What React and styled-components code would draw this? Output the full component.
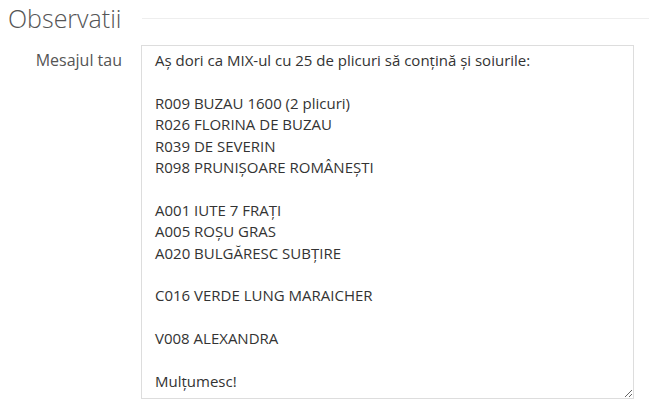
import React from 'react';
import styled, { createGlobalStyle } from 'styled-components';

const GlobalStyle = createGlobalStyle`
  body {
    margin: 0;
    background: #fff;
    font-family: 'Open Sans', 'Noto Sans', sans-serif;
    color: #333;
  }
`;

const Wrapper = styled.div`
  padding: 0 0 0 8px;
`;

const Legend = styled.div`
  display: flex;
  align-items: center;
  gap: 20px;
  height: 36px;
`;

const Title = styled.h2`
  margin: 0;
  font-size: 25px;
  font-weight: 300;
  color: #555;
  line-height: 36px;
`;

const Rule = styled.div`
  flex: 1;
  border-top: 1px solid #eee;
`;

const FormRow = styled.div`
  display: grid;
  grid-template-columns: 114px 493px;
  column-gap: 19px;
  margin-top: 9px;
`;

const Label = styled.label`
  text-align: right;
  font-size: 16px;
  color: #555;
  padding-top: 4px;
  line-height: 22px;
`;

const Message = styled.textarea`
  box-sizing: border-box;
  width: 493px;
  height: 354px;
  border: 1px solid #ddd;
  border-radius: 0;
  padding: 4px 13px;
  font-family: 'Open Sans', 'Noto Sans', sans-serif;
  font-size: 15px;
  line-height: 21.4px;
  color: #333;
  resize: both;
  overflow: hidden;
  outline: none;
`;

const text = `Aș dori ca MIX-ul cu 25 de plicuri să conțină și soiurile:

R009 BUZAU 1600 (2 plicuri)
R026 FLORINA DE BUZAU
R039 DE SEVERIN
R098 PRUNIȘOARE ROMÂNEȘTI

A001 IUTE 7 FRAȚI
A005 ROȘU GRAS
A020 BULGĂRESC SUBȚIRE

C016 VERDE LUNG MARAICHER

V008 ALEXANDRA

Mulțumesc!`;

export default function App() {
  return (
    <>
      <GlobalStyle />
      <Wrapper>
        <Legend>
          <Title>Observatii</Title>
          <Rule />
        </Legend>
        <FormRow>
          <Label htmlFor="msg">Mesajul tau</Label>
          <Message id="msg" defaultValue={text} />
        </FormRow>
      </Wrapper>
    </>
  );
}
